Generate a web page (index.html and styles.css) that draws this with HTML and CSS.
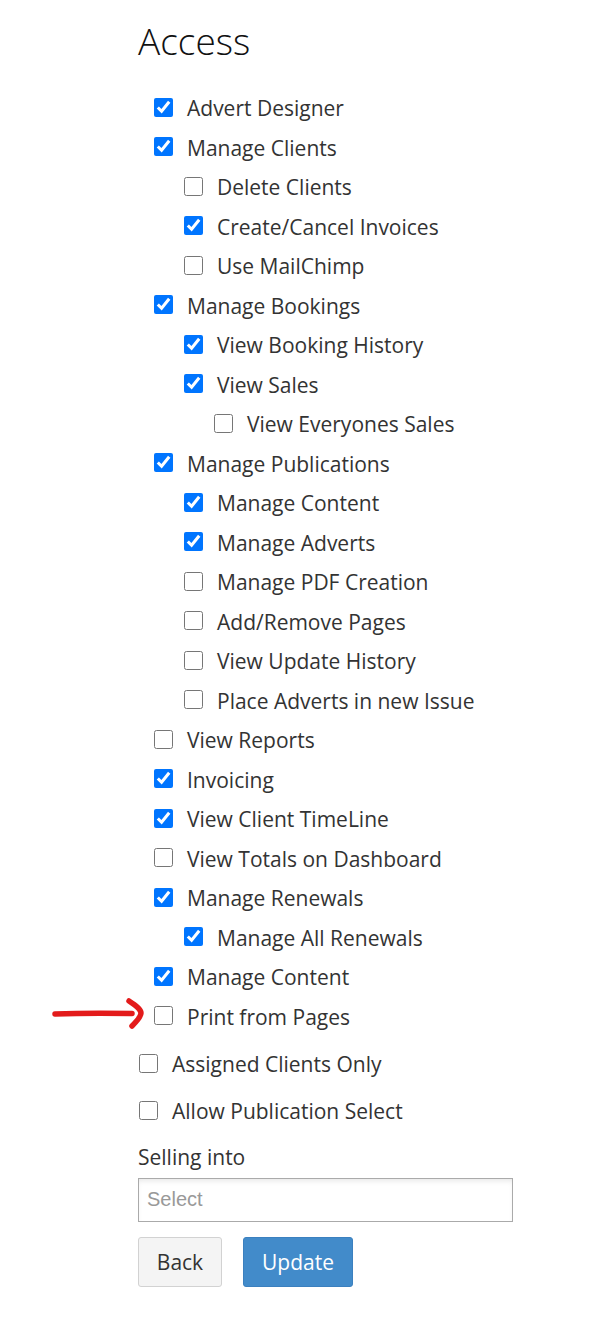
FILE: index.html
```html
<!DOCTYPE html>
<html>
<head>
<meta charset="utf-8">
<link rel="stylesheet" href="styles.css">
</head>
<body>
<div class="page">
  <h1 class="title">Access</h1>
  <ul class="perms">
    <li class="row l0"><input type="checkbox" checked><span>Advert Designer</span></li>
    <li class="row l0"><input type="checkbox" checked><span>Manage Clients</span></li>
    <li class="row l1"><input type="checkbox"><span>Delete Clients</span></li>
    <li class="row l1"><input type="checkbox" checked><span>Create/Cancel Invoices</span></li>
    <li class="row l1"><input type="checkbox"><span>Use MailChimp</span></li>
    <li class="row l0"><input type="checkbox" checked><span>Manage Bookings</span></li>
    <li class="row l1"><input type="checkbox" checked><span>View Booking History</span></li>
    <li class="row l1"><input type="checkbox" checked><span>View Sales</span></li>
    <li class="row l2"><input type="checkbox"><span>View Everyones Sales</span></li>
    <li class="row l0"><input type="checkbox" checked><span>Manage Publications</span></li>
    <li class="row l1"><input type="checkbox" checked><span>Manage Content</span></li>
    <li class="row l1"><input type="checkbox" checked><span>Manage Adverts</span></li>
    <li class="row l1"><input type="checkbox"><span>Manage PDF Creation</span></li>
    <li class="row l1"><input type="checkbox"><span>Add/Remove Pages</span></li>
    <li class="row l1"><input type="checkbox"><span>View Update History</span></li>
    <li class="row l1"><input type="checkbox"><span>Place Adverts in new Issue</span></li>
    <li class="row l0"><input type="checkbox"><span>View Reports</span></li>
    <li class="row l0"><input type="checkbox" checked><span>Invoicing</span></li>
    <li class="row l0"><input type="checkbox" checked><span>View Client TimeLine</span></li>
    <li class="row l0"><input type="checkbox"><span>View Totals on Dashboard</span></li>
    <li class="row l0"><input type="checkbox" checked><span>Manage Renewals</span></li>
    <li class="row l1"><input type="checkbox" checked><span>Manage All Renewals</span></li>
    <li class="row l0"><input type="checkbox" checked><span>Manage Content</span></li>
    <li class="row l0"><input type="checkbox"><span>Print from Pages</span></li>
  </ul>
  <div class="options">
    <label class="opt"><input type="checkbox"><span>Assigned Clients Only</span></label>
    <label class="opt"><input type="checkbox"><span>Allow Publication Select</span></label>
  </div>
  <div class="field">
    <div class="field-label">Selling into</div>
    <div class="select"><span class="placeholder">Select</span></div>
  </div>
  <div class="actions">
    <button class="btn btn-default">Back</button>
    <button class="btn btn-primary">Update</button>
  </div>
</div>
<svg class="arrow" width="160" height="50" viewBox="40 990 160 50">
  <path d="M55 1014 C80 1013 105 1013 132 1013.5" fill="none" stroke="#e31b1b" stroke-width="5.5" stroke-linecap="round"/>
  <path d="M129 1001 C135 1005 141 1009 141 1013 C141 1017 136 1022 132 1026" fill="none" stroke="#e31b1b" stroke-width="5.5" stroke-linecap="round" stroke-linejoin="round"/>
</svg>
</body>
</html>
```
FILE: styles.css
```css
html, body {
  margin: 0;
  padding: 0;
  background: #fff;
}
body {
  font-family: "Open Sans", "Liberation Sans", sans-serif;
  color: #333;
  position: relative;
}
.page {
  padding: 21px 0 0 138px;
}
.title {
  margin: 0;
  font-size: 37px;
  font-weight: 300;
  line-height: 40px;
  color: #111;
}
.perms {
  list-style: none;
  margin: 26.5px 0 0 0;
  padding: 0 0 0 16px;
}
.row {
  height: 39.5px;
  display: flex;
  align-items: center;
  font-size: 21px;
}
.row.l1 { padding-left: 30px; }
.row.l2 { padding-left: 60px; }
.row input, .opt input {
  width: 19px;
  height: 19px;
  margin: 0 14px 0 0;
  flex: none;
}
.row span, .opt span {
  position: relative;
  top: 1px;
}
.options {
  margin-top: 4px;
}
.opt {
  height: 47px;
  display: flex;
  align-items: center;
  font-size: 21px;
  padding-left: 1px;
}
.field {
  margin-top: 8px;
}
.field-label {
  font-size: 21px;
  line-height: 30px;
}
.select {
  margin-top: 6px;
  width: 375px;
  height: 44px;
  box-sizing: border-box;
  border: 1px solid #aaa;
  box-shadow: inset 0 4px 6px -3px rgba(0,0,0,0.12);
  display: flex;
  align-items: center;
  padding-left: 8px;
}
.placeholder {
  font-family: "Liberation Sans", Arial, sans-serif;
  font-size: 20px;
  color: #999;
}
.actions {
  margin-top: 15px;
  display: flex;
  gap: 21px;
}
.btn {
  font-family: "Open Sans", "Liberation Sans", sans-serif;
  font-size: 21px;
  height: 50px;
  box-sizing: border-box;
  border-radius: 3px;
  border: 1px solid #ccc;
  padding: 0;
}
.btn-default {
  width: 84px;
  background: #f4f4f4;
  color: #333;
  border-color: #d2d2d2;
}
.btn-primary {
  width: 110px;
  background: #428bca;
  border-color: #3b80bf;
  color: #fff;
}
.arrow {
  position: absolute;
  left: 40px;
  top: 990px;
}
```
